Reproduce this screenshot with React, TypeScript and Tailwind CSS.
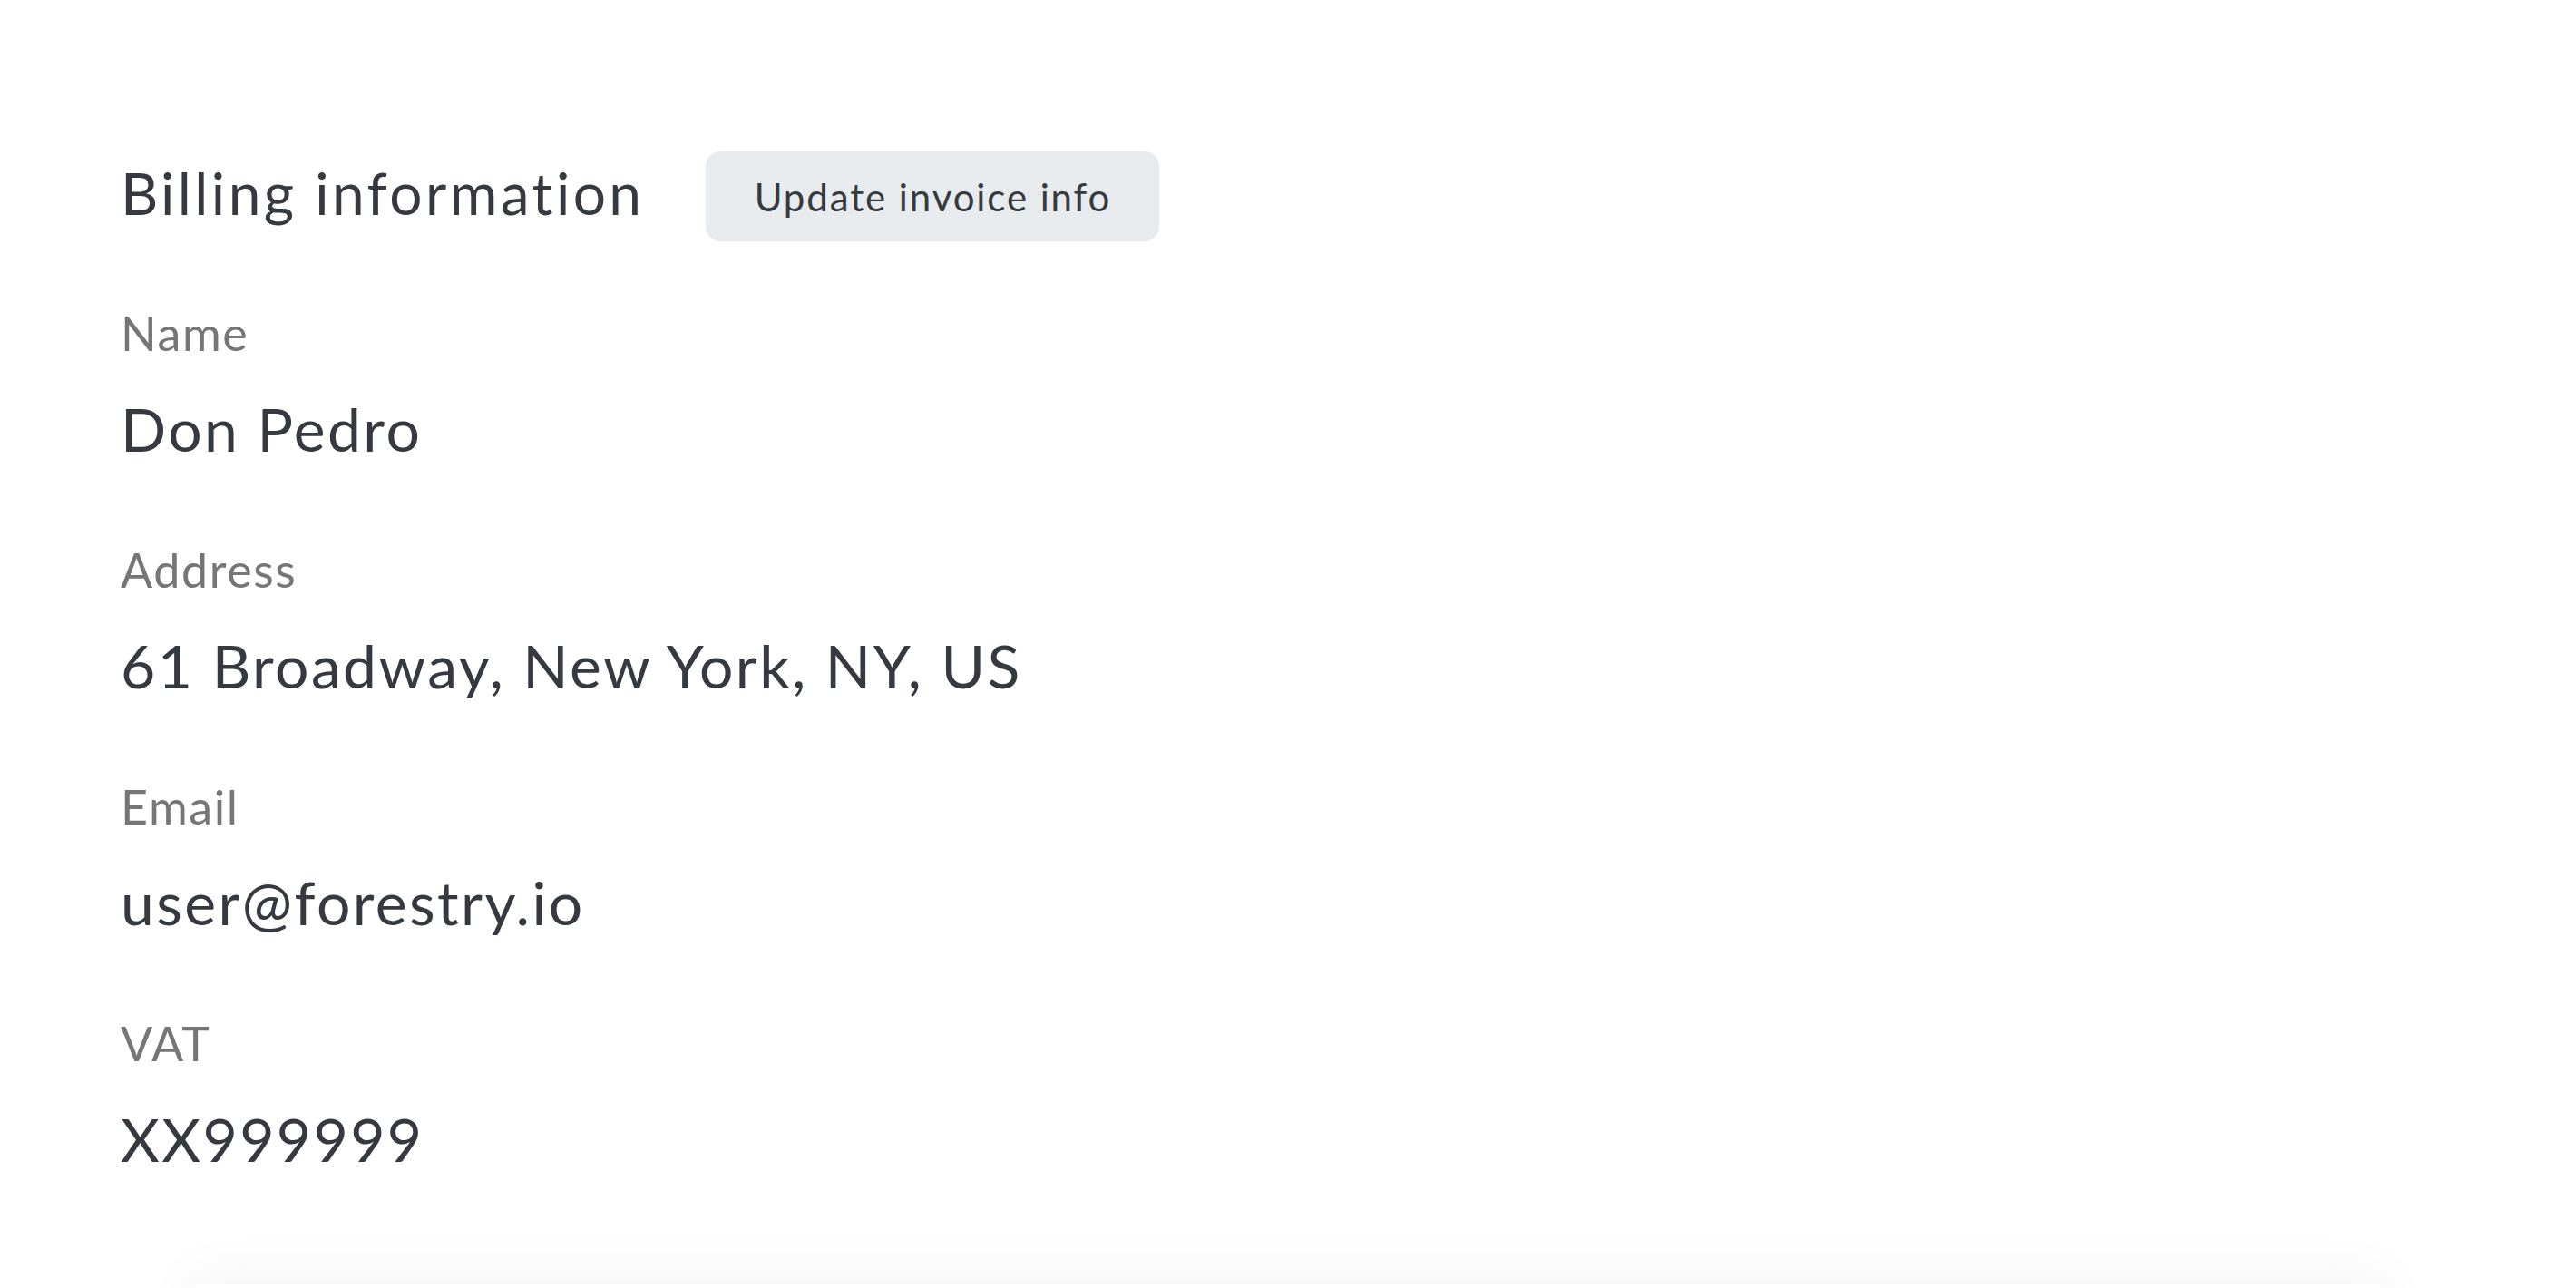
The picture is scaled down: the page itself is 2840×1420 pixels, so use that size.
const fields: { label: string; value: string }[] = [
  { label: "Name", value: "Don Pedro" },
  { label: "Address", value: "61 Broadway, New York, NY, US" },
  { label: "Email", value: "user@forestry.io" },
  { label: "VAT", value: "XX999999" },
];

export default function App() {
  return (
    <div
      className="min-h-screen bg-white overflow-hidden [font-variant-ligatures:none]"
      style={{ fontFamily: "Lato, 'Noto Sans', sans-serif" }}
    >
      <section className="pl-[133px] pt-[167px]">
        {/* Header row */}
        <div className="flex items-start">
          <h2 className="mt-[7px] text-[64px] leading-[77px] font-normal tracking-[3.4px] text-[#353a40]">
            Billing information
          </h2>
          <button className="ml-[68px] h-[99px] w-[500px] rounded-[16px] bg-[#e8ebee] text-[42px] leading-none tracking-[1.9px] text-[#353a40]">
            Update invoice info
          </button>
        </div>

        {/* Fields */}
        <div className="mt-[70px] flex flex-col gap-[84px]">
          {fields.map((f) => (
            <div key={f.label} className="flex flex-col gap-[35px]">
              <div className="text-[52px] leading-[62px] tracking-[1.6px] text-[#767676]">{f.label}</div>
              <div className="text-[66px] leading-[80px] tracking-[2.4px] text-[#353a40]">{f.value}</div>
            </div>
          ))}
        </div>
      </section>

      {/* next card peeking in at the bottom */}
      <div className="mx-[210px] mt-[120px] h-[200px] rounded-[12px] bg-white shadow-[0_-8px_60px_rgba(0,0,0,0.05)]" />
    </div>
  );
}
